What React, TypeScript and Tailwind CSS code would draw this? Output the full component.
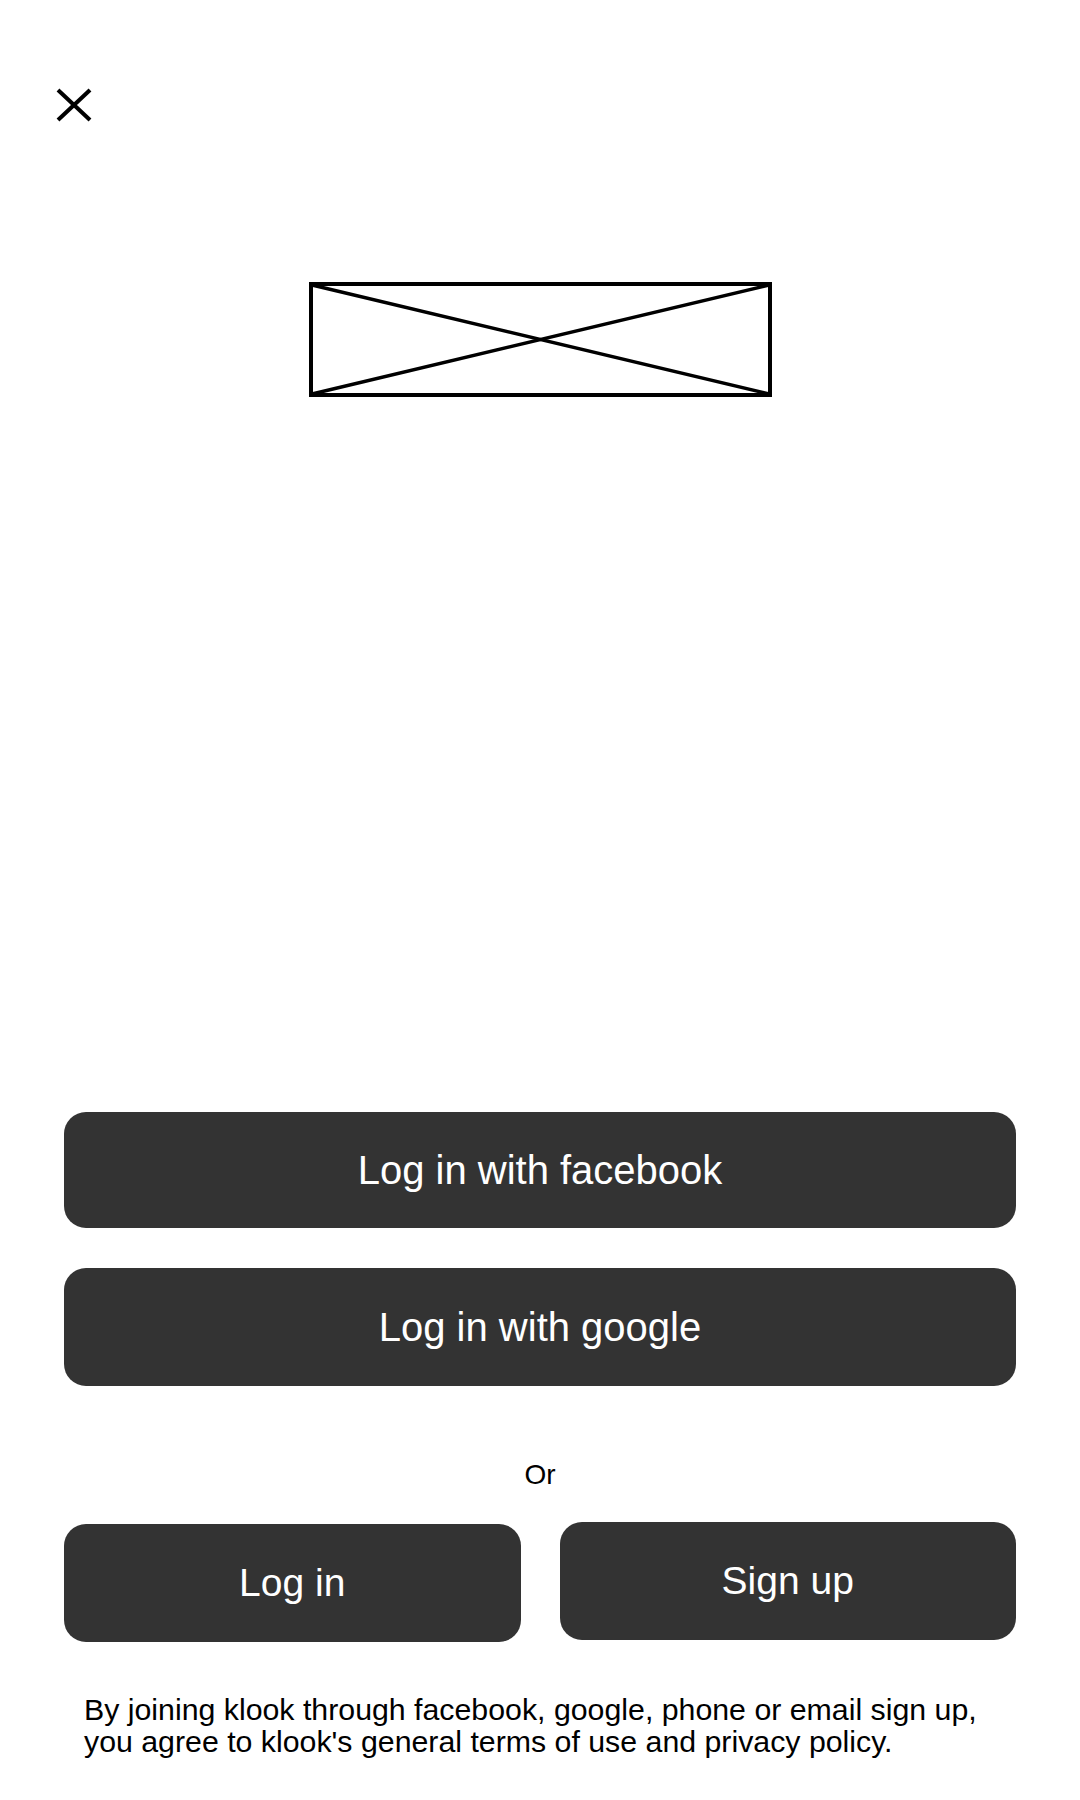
import React from 'react';

const CloseIcon: React.FC = () => (
  <svg width="36" height="34" viewBox="0 0 36 34" fill="none">
    <line x1="2" y1="2" x2="34" y2="32" stroke="#000" strokeWidth="4" />
    <line x1="34" y1="2" x2="2" y2="32" stroke="#000" strokeWidth="4" />
  </svg>
);

const LogoPlaceholder: React.FC = () => (
  <svg width="463" height="115" viewBox="0 0 463 115" fill="none">
    <rect x="2" y="2" width="459" height="111" stroke="#000" strokeWidth="4" />
    <line x1="3" y1="3" x2="460" y2="112" stroke="#000" strokeWidth="3.5" />
    <line x1="460" y1="3" x2="3" y2="112" stroke="#000" strokeWidth="3.5" />
  </svg>
);

const App: React.FC = () => {
  return (
    <div
      className="w-[1080px] min-h-[1800px] bg-white flex flex-col"
      style={{ fontFamily: '"Liberation Sans", Arial, sans-serif' }}
    >
      <div className="pt-[88px] pl-[56px]">
        <CloseIcon />
      </div>

      <div className="mt-[160px] flex justify-center">
        <LogoPlaceholder />
      </div>

      <div className="mt-[715px] px-16 flex flex-col">
        <button className="h-[116px] w-full rounded-[22px] bg-[#333333] text-white text-[40px]">
          Log in with facebook
        </button>
        <button className="mt-[40px] h-[118px] w-full rounded-[22px] bg-[#333333] text-white text-[40px]">
          Log in with google
        </button>

        <p className="mt-[73px] text-center text-[28px] leading-[32px] text-black">Or</p>

        <div className="mt-[31px] grid grid-cols-2 gap-[39px] items-start">
          <button className="mt-[2px] h-[118px] rounded-[22px] bg-[#333333] text-white text-[39px]">
            Log in
          </button>
          <button className="h-[118px] rounded-[22px] bg-[#333333] text-white text-[39px]">
            Sign up
          </button>
        </div>

        <p className="mt-[52px] pl-[20px] text-[30.3px] leading-[32px] text-black">
          By joining klook through facebook, google, phone or email sign up,
          <br />
          you agree to klook's general terms of use and privacy policy.
        </p>
      </div>
    </div>
  );
};

export default App;
